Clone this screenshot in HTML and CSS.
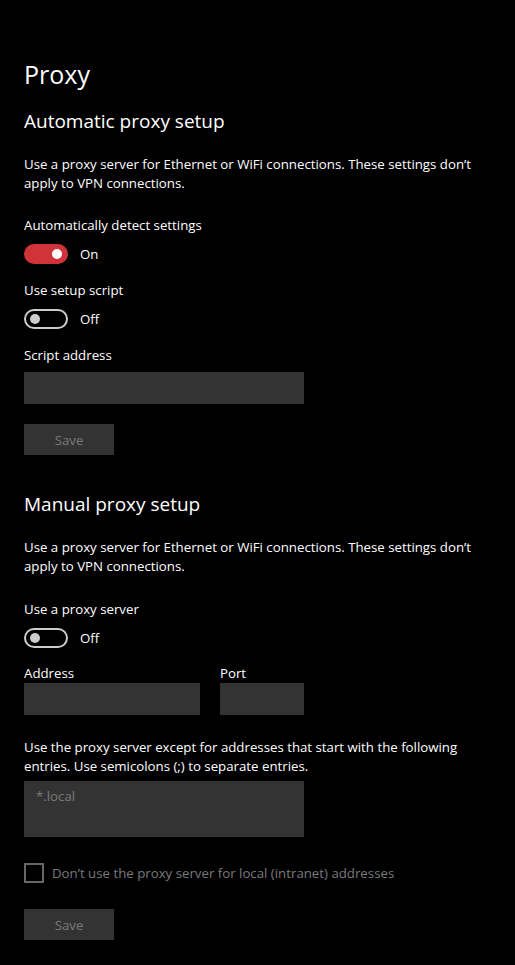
FILE: index.html
```html
<!DOCTYPE html>
<html lang="en">
<head>
  <meta charset="UTF-8">
  <meta name="viewport" content="width=device-width, initial-scale=1.0">
  <title>Proxy</title>
  <link rel="stylesheet" href="styles.css">
</head>
<body>
  <div class="page">
    <h1 class="title">Proxy</h1>

    <!-- Automatic proxy setup -->
    <h2 class="section">Automatic proxy setup</h2>
    <p class="desc">Use a proxy server for Ethernet or WiFi connections. These settings don’t apply to VPN connections.</p>

    <div class="label label-first">Automatically detect settings</div>
    <div class="toggle-row">
      <span class="toggle on"><span class="knob"></span></span>
      <span class="state">On</span>
    </div>

    <div class="label">Use setup script</div>
    <div class="toggle-row">
      <span class="toggle"><span class="knob"></span></span>
      <span class="state">Off</span>
    </div>

    <div class="label">Script address</div>
    <div class="field field-script"></div>

    <button class="save">Save</button>

    <!-- Manual proxy setup -->
    <h2 class="section section-manual">Manual proxy setup</h2>
    <p class="desc">Use a proxy server for Ethernet or WiFi connections. These settings don’t apply to VPN connections.</p>

    <div class="label label-first label-proxy">Use a proxy server</div>
    <div class="toggle-row">
      <span class="toggle"><span class="knob"></span></span>
      <span class="state">Off</span>
    </div>

    <div class="addr-row">
      <div class="addr-col">
        <div class="label-tight">Address</div>
        <div class="field field-addr"></div>
      </div>
      <div class="addr-col">
        <div class="label-tight">Port</div>
        <div class="field field-port"></div>
      </div>
    </div>

    <p class="desc desc-except">Use the proxy server except for addresses that start with the following entries. Use semicolons (;) to separate entries.</p>
    <div class="field field-except">*.local</div>

    <div class="check-row">
      <span class="checkbox"></span>
      <span class="check-label">Don’t use the proxy server for local (intranet) addresses</span>
    </div>

    <button class="save save-manual">Save</button>
  </div>
</body>
</html>
```

FILE: styles.css
```css
body {
  margin: 0;
  background-color: #000;
  color: #fff;
  font-family: "Open Sans", "Noto Sans", sans-serif;
  font-size: 13.25px;
}

.page {
  padding: 56px 24px 0 24px;
  width: 470px;
}

.title {
  font-size: 25px;
  font-weight: 400;
  line-height: 36px;
  margin: 0;
}

.section {
  font-size: 19px;
  font-weight: 400;
  line-height: 28px;
  margin: 15px 0 0;
}

.section-manual {
  margin-top: 35px;
}

.desc {
  margin: 20px 0 0;
  line-height: 19px;
  width: 476px;
}

.desc-except {
  margin-top: 23px;
}

.label {
  line-height: 19px;
  margin-top: 17px;
}

.label-first {
  margin-top: 23px;
}

.label-proxy {
  margin-top: 24px;
}

.label-tight {
  line-height: 19px;
}

.toggle-row {
  display: flex;
  align-items: center;
  height: 20px;
  margin-top: 9px;
}

.toggle {
  box-sizing: border-box;
  width: 44px;
  height: 20px;
  border: 2px solid #cccccc;
  border-radius: 10px;
  display: flex;
  align-items: center;
  padding: 0 4px;
}

.toggle .knob {
  width: 10px;
  height: 10px;
  border-radius: 50%;
  background-color: #cccccc;
}

.toggle.on {
  background-color: #d13438;
  border-color: #d13438;
  justify-content: flex-end;
}

.toggle.on .knob {
  background-color: #fff;
}

.state {
  margin-left: 12px;
}

.field {
  background-color: #333333;
  height: 32px;
}

.field-script {
  width: 280px;
  margin-top: 7px;
}

.save {
  display: block;
  width: 90px;
  height: 31px;
  margin-top: 20px;
  border: none;
  padding: 0;
  background-color: #333333;
  color: #7a7a7a;
  font-family: inherit;
  font-size: 13.25px;
}

.save-manual {
  margin-top: 26px;
}

.addr-row {
  display: flex;
  gap: 20px;
  margin-top: 16px;
}

.field-addr {
  width: 176px;
}

.field-port {
  width: 84px;
}

.field-except {
  width: 268px;
  margin-top: 5px;
  padding: 6px 0 0 12px;
  height: 50px;
  color: #7a7a7a;
}

.check-row {
  display: flex;
  align-items: center;
  margin-top: 26px;
}

.checkbox {
  box-sizing: border-box;
  width: 20px;
  height: 20px;
  border: 2px solid #666666;
}

.check-label {
  margin-left: 8px;
  color: #7a7a7a;
}
```
